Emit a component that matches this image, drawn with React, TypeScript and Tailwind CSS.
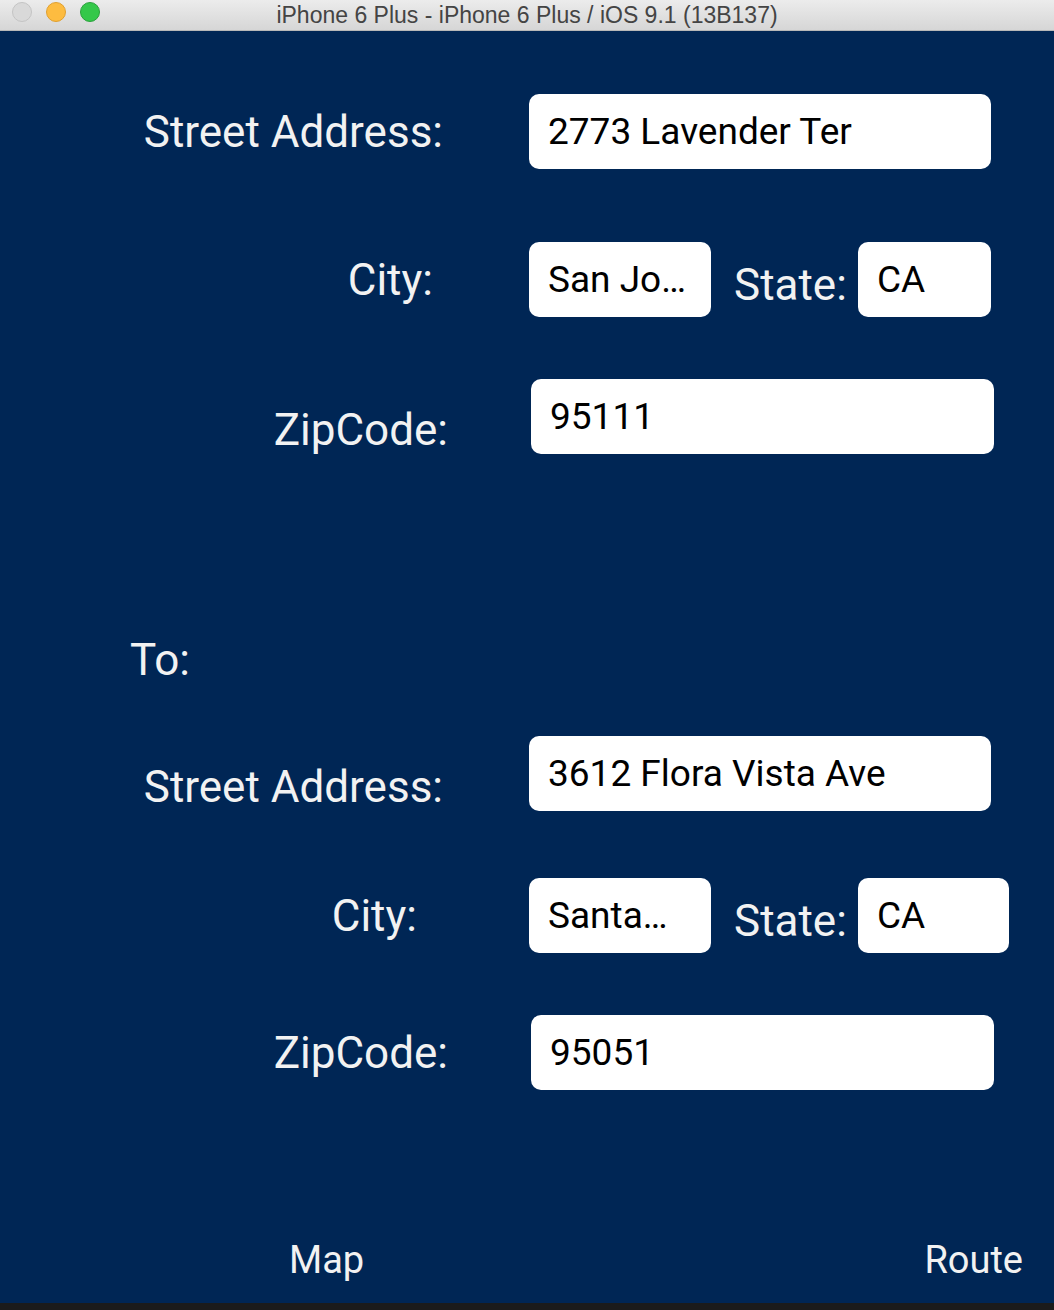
const Field = ({ value, className }: { value: string; className: string }) => (
  <div
    className={`flex h-[75px] items-center rounded-[10px] bg-white pl-[19px] text-[37px] text-black ${className}`}
  >
    {value}
  </div>
);

function AddressBlock({
  street,
  city,
  state,
  zip,
  wideState,
  cityPad,
  streetLabel,
  cityGap,
  zipLabel,
}: {
  street: string;
  city: string;
  state: string;
  zip: string;
  wideState?: boolean;
  cityPad: string;
  streetLabel: string;
  cityGap: string;
  zipLabel: string;
}) {
  return (
    <div className="flex flex-col">
      <div className="flex items-center">
        <div className={`w-[529px] pr-[86px] text-right ${streetLabel}`}>Street Address:</div>
        <Field value={street} className="w-[462px]" />
      </div>
      <div className={`flex items-center ${cityGap}`}>
        <div className={`w-[529px] text-right ${cityPad}`}>City:</div>
        <Field value={city} className="w-[182px]" />
        <div className="ml-[23px] w-[124px] translate-y-[5px]">State:</div>
        <Field value={state} className={wideState ? "w-[151px]" : "w-[133px]"} />
      </div>
      <div className="mt-[62px] flex items-center">
        <div className={`w-[531px] pr-[83px] text-right ${zipLabel}`}>ZipCode:</div>
        <Field value={zip} className="w-[463px]" />
      </div>
    </div>
  );
}

export default function App() {
  return (
    <div className="flex h-[1310px] w-[1054px] flex-col bg-[#1b1b1b] font-['Roboto',sans-serif]">
      <div className="relative flex h-[31px] items-center justify-center border-b border-[#b8b8b8] bg-gradient-to-b from-[#ececec] to-[#d6d6d6]">
        <div className="absolute left-[12px] top-[2px] flex gap-[14px]">
          <span className="h-[20px] w-[20px] rounded-full border border-[#c4c4c4] bg-[#d9d9d9]" />
          <span className="h-[20px] w-[20px] rounded-full border border-[#e0a030] bg-[#fdbc40]" />
          <span className="h-[20px] w-[20px] rounded-full border border-[#2aa13c] bg-[#34c84a]" />
        </div>
        <span className="text-[23px] text-[#444] font-['Liberation_Sans',sans-serif]">
          iPhone 6 Plus - iPhone 6 Plus / iOS 9.1 (13B137)
        </span>
      </div>
      <div className="flex h-[1272px] flex-col bg-[#002655] text-[44px] text-[#f2f2f2]">
        <div className="mt-[63px]">
          <AddressBlock
            street="2773 Lavender Ter"
            city="San Jo…"
            state="CA"
            zip="95111"
            cityPad="pr-[96px]"
            streetLabel=""
            cityGap="mt-[73px]"
            zipLabel="translate-y-[13px]"
          />
        </div>
        <div className="ml-[130px] mt-[184px] leading-none">To:</div>
        <div className="mt-[54px]">
          <AddressBlock
            street="3612 Flora Vista Ave"
            city="Santa…"
            state="CA"
            zip="95051"
            wideState
            cityPad="pr-[112px]"
            streetLabel="translate-y-[13px]"
            cityGap="mt-[67px]"
            zipLabel=""
          />
        </div>
        <div className="mt-[142px] flex items-center text-[38px]">
          <div className="ml-[289px]">Map</div>
          <div className="ml-auto mr-[31px]">Route</div>
        </div>
      </div>
    </div>
  );
}
